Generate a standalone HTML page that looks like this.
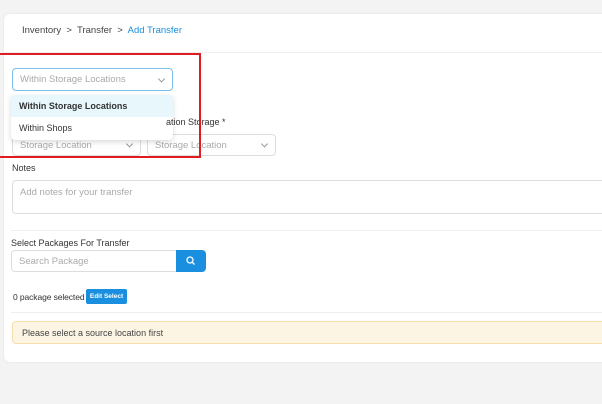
<!DOCTYPE html>
<html><head><style>
*{box-sizing:border-box;margin:0;padding:0}
body{width:602px;height:404px;background:#f3f3f3;font-family:"Liberation Sans",sans-serif;position:relative;overflow:hidden;color:#333}
.a{position:absolute}
.card{left:4px;top:14px;width:640px;height:348px;background:#fff;border-radius:6px;box-shadow:0 0 2px rgba(0,0,0,.08)}
.in{border:1px solid #ddd;border-radius:4px;background:#fff;color:#aaa;font-size:9.5px;padding-left:7px;display:flex;align-items:center}
.chev{position:absolute;right:8px;top:50%;width:5px;height:5px;border-right:1px solid #999;border-bottom:1px solid #999;transform:translateY(-70%) rotate(45deg)}
.lbl{font-size:9px;color:#333}
</style></head><body>
<div class="a card"></div>
<div class="a" style="left:22px;top:25px;font-size:9.5px;color:#444">Inventory &nbsp;&gt;&nbsp; Transfer &nbsp;&gt;&nbsp; <span style="color:#1b8fdc">Add Transfer</span></div>
<div class="a" style="left:4px;top:52px;width:600px;height:1px;background:#eee"></div>

<div class="a in" style="left:12px;top:134px;width:129px;height:22px">Storage Location<span class="chev"></span></div>
<div class="a in" style="left:147px;top:134px;width:129px;height:22px">Storage Location<span class="chev"></span></div>

<div class="a in" style="left:12px;top:68px;width:161px;height:23px;border-color:#7cc0ea">Within Storage Locations<span class="chev"></span></div>
<div class="a" style="left:11px;top:95px;width:162px;height:45px;background:#fff;border-radius:4px;box-shadow:0 2px 6px rgba(0,0,0,.15);overflow:hidden">
<div style="height:22px;background:#e8f7fc;font-size:9px;font-weight:bold;color:#333;padding:6px 8px 0">Within Storage Locations</div>
<div style="height:23px;font-size:9px;color:#333;padding:6px 8px 0">Within Shops</div>
</div>
<div class="a lbl" style="left:166px;top:117px">ation Storage *</div>
<div class="a" style="left:-2px;top:53px;width:203px;height:105px;border:2.5px solid #e11b22"></div>

<div class="a lbl" style="left:12px;top:163px">Notes</div>
<div class="a in" style="left:12px;top:180px;width:600px;height:34px;align-items:flex-start;padding-top:6px">Add notes for your transfer</div>
<div class="a" style="left:11px;top:230px;width:600px;height:1px;background:#eee"></div>
<div class="a lbl" style="left:11px;top:238px">Select Packages For Transfer</div>
<div class="a in" style="left:11px;top:250px;width:166px;height:22px;border-radius:4px 0 0 4px">Search Package</div>
<div class="a" style="left:176px;top:250px;width:30px;height:22px;background:#1a8fe0;border-radius:0 4px 4px 0">
<svg width="30" height="22"><circle cx="14" cy="10" r="3" fill="none" stroke="#fff" stroke-width="1.3"/><path d="M16 12l2.5 2.5" stroke="#fff" stroke-width="1.3"/></svg></div>
<div class="a" style="left:13px;top:292px;font-size:8.5px;color:#333;letter-spacing:-0.1px">0 package selected</div>
<div class="a" style="left:86px;top:289px;width:41px;height:15px;background:#1a8fe0;border-radius:2px;color:#fff;font-size:6.5px;font-weight:bold;text-align:center;line-height:15px">Edit Select</div>
<div class="a" style="left:11px;top:312px;width:600px;height:1px;background:#eee"></div>
<div class="a" style="left:12px;top:321px;width:600px;height:23px;background:#fdf5e4;border:1px solid #f8dfa9;border-radius:4px;font-size:9px;color:#444;padding:6px 0 0 9px">Please select a source location first</div>
</body></html>
